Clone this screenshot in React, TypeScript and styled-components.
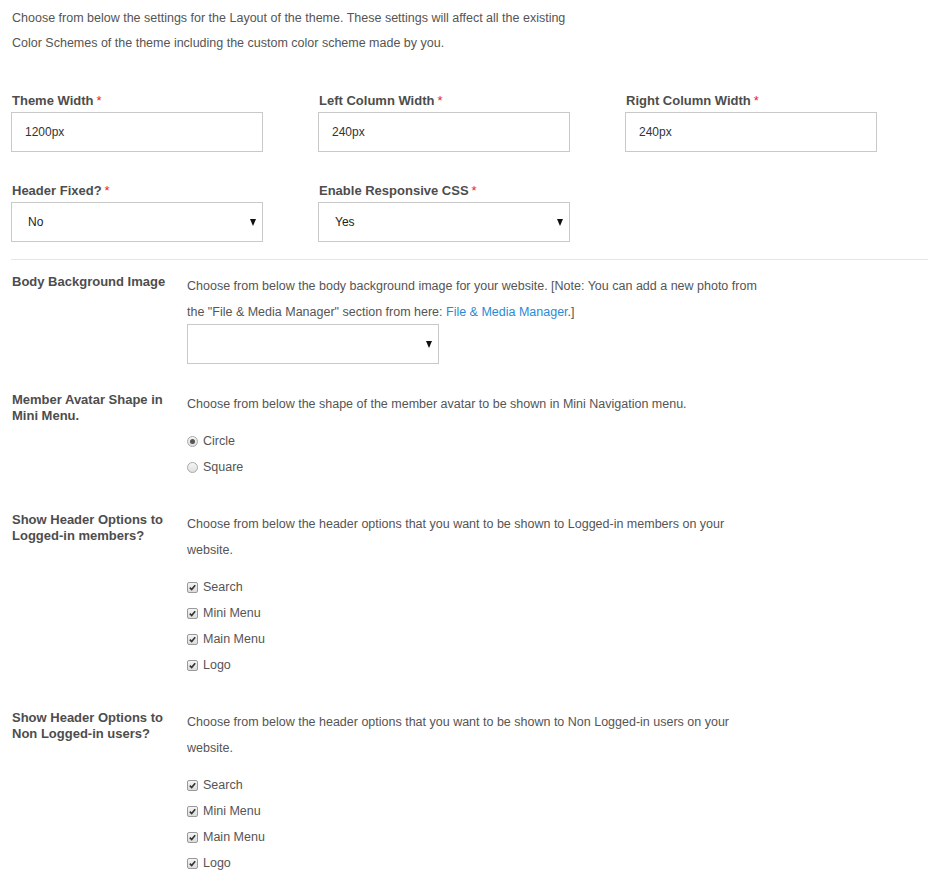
import React from 'react';
import styled, {createGlobalStyle} from 'styled-components';

const GlobalStyle = createGlobalStyle`
  body {
    margin: 0;
    background: #fff;
    font-family: "Liberation Sans", Arial, sans-serif;
    font-size: 12.5px;
    color: #555;
  }
`;

const Page = styled.div`
  width: 917px;
  padding: 6px 3px 20px 11px;
`;

const Intro = styled.p`
  margin: 0 0 35px 1px;
  line-height: 25px;
  width: 575px;
`;

const FieldGrid = styled.div`
  display: grid;
  grid-template-columns: repeat(3, 252px);
  column-gap: 55px;
  row-gap: 29px;
`;

const Field = styled.div`
  display: flex;
  flex-direction: column;
  gap: 3px;
`;

const FieldLabel = styled.label`
  font-weight: bold;
  font-size: 13px;
  line-height: 16px;
  color: #4d4d4d;
  padding: 2px 0 0 1px;
`;

const Required = styled.span`
  color: #e8262a;
  font-weight: normal;
  margin-left: 3px;
`;

const TextInput = styled.div`
  box-sizing: border-box;
  height: 40px;
  border: 1px solid #c9c9c9;
  padding: 0 13px;
  display: flex;
  align-items: center;
  color: #333;
  font-size: 12px;
`;

const SelectBox = styled.div<{ $width?: number }>`
  box-sizing: border-box;
  width: ${p => (p.$width ? `${p.$width}px` : 'auto')};
  height: 40px;
  border: 1px solid #c9c9c9;
  padding: 0 6px 0 16px;
  display: flex;
  align-items: center;
  justify-content: space-between;
  color: #222;
  font-size: 12px;
`;

const Arrow = styled.span`
  width: 0;
  height: 0;
  border-left: 3.5px solid transparent;
  border-right: 3.5px solid transparent;
  border-top: 7px solid #111;
`;

const Divider = styled.hr`
  border: 0;
  border-top: 1px solid #e6e6e6;
  margin: 17px 0 13px;
`;

const Row = styled.div`
  display: flex;
  margin-bottom: 27px;
`;

const RowLabel = styled.div`
  width: 176px;
  flex-shrink: 0;
  padding: 1px 8px 0 1px;
  box-sizing: border-box;
  font-weight: bold;
  font-size: 13px;
  line-height: 16px;
  color: #4d4d4d;
`;

const RowBody = styled.div`
  width: 580px;
`;

const Description = styled.p`
  margin: 0 0 -1px;
  line-height: 26px;
`;

const Link = styled.a`
  color: #2a8ad5;
  text-decoration: none;
`;

const OptionList = styled.div`
  margin: 12px 0 4px;
  display: flex;
  flex-direction: column;
`;

const Option = styled.div`
  display: flex;
  align-items: center;
  height: 26px;
  gap: 5px;
`;

const Check = styled.span`
  width: 9px;
  height: 9px;
  border: 1px solid #9a9a9a;
  border-radius: 2px;
  background: linear-gradient(#f4f4f4, #dcdcdc);
  display: flex;
  align-items: center;
  justify-content: center;
`;

const Radio = styled.span<{ $on?: boolean }>`
  width: 9px;
  height: 9px;
  border: 1px solid #a8a8a8;
  border-radius: 50%;
  background: linear-gradient(#f6f6f6, #dedede);
  display: flex;
  align-items: center;
  justify-content: center;
  &::after {
    content: '';
    width: 5px;
    height: 5px;
    border-radius: 50%;
    background: ${p => (p.$on ? '#555' : 'transparent')};
  }
`;

const CheckMark = () => (
  <svg width="7" height="7" viewBox="0 0 7 7">
    <path d="M0.8 3.6 L2.7 5.6 L6.2 1.2" fill="none" stroke="#333" strokeWidth="1.6"/>
  </svg>
);

const headerOptions = ['Search', 'Mini Menu', 'Main Menu', 'Logo'];

const CheckList = () => (
  <OptionList>
    {headerOptions.map(opt => (
      <Option key={opt}><Check><CheckMark/></Check>{opt}</Option>
    ))}
  </OptionList>
);

const App = () => (
  <Page>
    <GlobalStyle/>
    <Intro>
      Choose from below the settings for the Layout of the theme. These settings will affect all the existing
      Color Schemes of the theme including the custom color scheme made by you.
    </Intro>

    <FieldGrid>
      <Field>
        <FieldLabel>Theme Width<Required>*</Required></FieldLabel>
        <TextInput>1200px</TextInput>
      </Field>
      <Field>
        <FieldLabel>Left Column Width<Required>*</Required></FieldLabel>
        <TextInput>240px</TextInput>
      </Field>
      <Field>
        <FieldLabel>Right Column Width<Required>*</Required></FieldLabel>
        <TextInput>240px</TextInput>
      </Field>
      <Field>
        <FieldLabel>Header Fixed?<Required>*</Required></FieldLabel>
        <SelectBox>No<Arrow/></SelectBox>
      </Field>
      <Field>
        <FieldLabel>Enable Responsive CSS<Required>*</Required></FieldLabel>
        <SelectBox>Yes<Arrow/></SelectBox>
      </Field>
    </FieldGrid>

    <Divider/>

    <Row>
      <RowLabel>Body Background Image</RowLabel>
      <RowBody>
        <Description>
          Choose from below the body background image for your website. [Note: You can add a new photo from
          the "File &amp; Media Manager" section from here: <Link href="#">File &amp; Media Manager</Link>.]
        </Description>
        <SelectBox $width={252}>&nbsp;<Arrow/></SelectBox>
      </RowBody>
    </Row>

    <Row>
      <RowLabel>Member Avatar Shape in Mini Menu.</RowLabel>
      <RowBody>
        <Description>Choose from below the shape of the member avatar to be shown in Mini Navigation menu.</Description>
        <OptionList>
          <Option><Radio $on/>Circle</Option>
          <Option><Radio/>Square</Option>
        </OptionList>
      </RowBody>
    </Row>

    <Row>
      <RowLabel>Show Header Options to Logged-in members?</RowLabel>
      <RowBody>
        <Description>
          Choose from below the header options that you want to be shown to Logged-in members on your website.
        </Description>
        <CheckList/>
      </RowBody>
    </Row>

    <Row>
      <RowLabel>Show Header Options to Non Logged-in users?</RowLabel>
      <RowBody>
        <Description>
          Choose from below the header options that you want to be shown to Non Logged-in users on your website.
        </Description>
        <CheckList/>
      </RowBody>
    </Row>
  </Page>
);

export default App;
